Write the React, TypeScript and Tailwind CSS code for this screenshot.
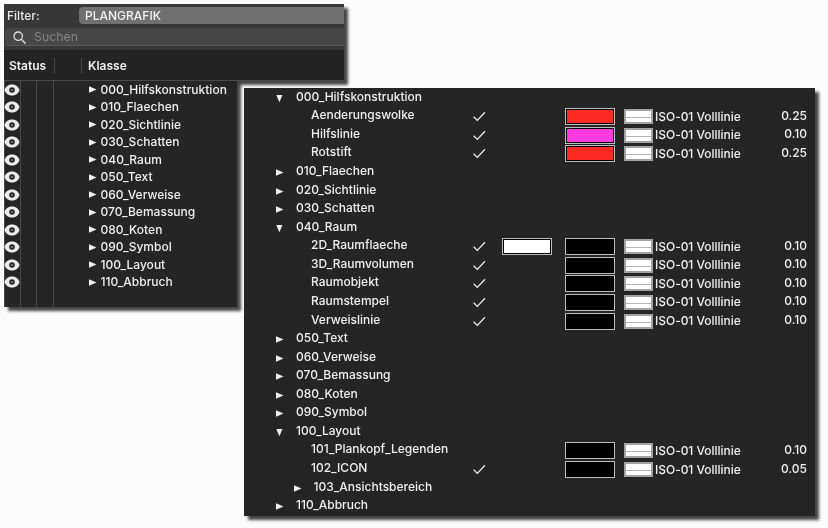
import React from "react";

interface ClassRow {
  name: string;
  kind: "open" | "closed" | "leaf" | "subClosed";
  checked?: boolean;
  fill?: string;
  pen?: string;
  weight?: string;
}

const filterClasses = [
  "000_Hilfskonstruktion",
  "010_Flaechen",
  "020_Sichtlinie",
  "030_Schatten",
  "040_Raum",
  "050_Text",
  "060_Verweise",
  "070_Bemassung",
  "080_Koten",
  "090_Symbol",
  "100_Layout",
  "110_Abbruch",
];

const classRows: ClassRow[] = [
  { name: "000_Hilfskonstruktion", kind: "open" },
  { name: "Aenderungswolke", kind: "leaf", checked: true, pen: "bg-[#ff2a22]", weight: "0.25" },
  { name: "Hilfslinie", kind: "leaf", checked: true, pen: "bg-[#fb3be0]", weight: "0.10" },
  { name: "Rotstift", kind: "leaf", checked: true, pen: "bg-[#ff2a22]", weight: "0.25" },
  { name: "010_Flaechen", kind: "closed" },
  { name: "020_Sichtlinie", kind: "closed" },
  { name: "030_Schatten", kind: "closed" },
  { name: "040_Raum", kind: "open" },
  { name: "2D_Raumflaeche", kind: "leaf", checked: true, fill: "bg-white", pen: "bg-black", weight: "0.10" },
  { name: "3D_Raumvolumen", kind: "leaf", checked: true, pen: "bg-black", weight: "0.10" },
  { name: "Raumobjekt", kind: "leaf", checked: true, pen: "bg-black", weight: "0.10" },
  { name: "Raumstempel", kind: "leaf", checked: true, pen: "bg-black", weight: "0.10" },
  { name: "Verweislinie", kind: "leaf", checked: true, pen: "bg-black", weight: "0.10" },
  { name: "050_Text", kind: "closed" },
  { name: "060_Verweise", kind: "closed" },
  { name: "070_Bemassung", kind: "closed" },
  { name: "080_Koten", kind: "closed" },
  { name: "090_Symbol", kind: "closed" },
  { name: "100_Layout", kind: "open" },
  { name: "101_Plankopf_Legenden", kind: "leaf", pen: "bg-black", weight: "0.10" },
  { name: "102_ICON", kind: "leaf", checked: true, pen: "bg-black", weight: "0.05" },
  { name: "103_Ansichtsbereich", kind: "subClosed" },
  { name: "110_Abbruch", kind: "closed" },
];

const indents: Record<ClassRow["kind"], string> = {
  open: "pl-[31px]",
  closed: "pl-[31px]",
  leaf: "pl-[67px]",
  subClosed: "pl-[48.5px]",
};

const Triangle = ({ open = false }: { open?: boolean }) => (
  <svg width="9" height="9" viewBox="0 0 9 9" fill="#f0f0f0" className="shrink-0">
    <path d={open ? "M1.3 1H7.5L4.4 8.3Z" : "M1 1.3V7.7L8.5 4.5Z"} />
  </svg>
);

const Eye = () => (
  <svg width="16" height="12" viewBox="0 0 16 12" className="-ml-px shrink-0">
    <path d="M0.5 6C1.8 2 4.7.5 8 .5S14.2 2 15.5 6C14.2 10 11.3 11.5 8 11.5S1.8 10 .5 6Z" fill="#ececec" />
    <circle cx="8" cy="6" r="2.8" fill="#252525" />
    <circle cx="8" cy="6" r="1" fill="#8a8a8a" />
  </svg>
);

const Swatch = ({ color }: { color: string }) => (
  <div className="h-[17px] w-[50px] border-[1.5px] border-[#bcbcbc] bg-black p-px">
    <div className={`h-full w-full ${color}`} />
  </div>
);

const FilterWindow = () => (
  <div className="absolute left-1 top-1 w-[340px] drop-shadow-[4.5px_4.5px_1.5px_rgba(0,0,0,0.72)]">
    <div className="h-[46px] bg-[#373737] pt-[3px]">
      <div className="flex h-[17px] items-center">
        <span className="w-[75px] pl-[3px] text-[12px] text-[#e8e8e8]">Filter:</span>
        <div className="flex h-[17px] flex-1 items-center rounded-l bg-[#707070] pl-1.5 text-[12px] text-[#f2f2f2]">
          PLANGRAFIK
        </div>
      </div>
      <div className="ml-px mt-1 flex h-[18px] items-center rounded-l border-y border-b-[#5c5c5c] border-t-[#424242] bg-[#474747] pl-2">
        <svg width="13" height="13" viewBox="0 0 13 13" fill="none" stroke="#dedede" strokeWidth="1.3">
          <circle cx="5.2" cy="5.2" r="4.2" />
          <path d="M8.3 8.3L12.2 12.2" strokeLinecap="round" />
        </svg>
        <span className="ml-2 text-[12.3px] font-normal text-[#858585]">Suchen</span>
      </div>
    </div>
    <div className="flex h-[31px] items-center border-b border-[#4a4a4a] bg-[#242424] pt-px text-[12px] font-semibold text-[#f0f0f0]">
      <span className="w-[50px] pl-[5px]">Status</span>
      <span className="h-4 w-[28px] border-x border-[#454545]" />
      <span className="pl-1.5">Klasse</span>
    </div>
    <div className="flex h-[226px] w-[233px] bg-[#252525]">
      <div className="w-[17px] border-x border-[#484848]">
        {filterClasses.map((name) => (
          <div key={name} className="flex h-[17.5px] items-center">
            <Eye />
          </div>
        ))}
      </div>
      <div className="w-[15.5px] border-r border-[#484848]" />
      <div className="w-[17px] border-r border-[#484848]" />
      <div className="pl-[34px]">
        {filterClasses.map((name) => (
          <div key={name} className="flex h-[17.5px] items-center gap-1">
            <Triangle />
            <span className="tracking-[0.02px]">{name}</span>
          </div>
        ))}
      </div>
    </div>
  </div>
);

const ClassWindow = () => (
  <div className="absolute left-[244px] top-[88px] h-[428px] w-[571px] bg-[#252525] drop-shadow-[4.5px_4.5px_1.5px_rgba(0,0,0,0.72)]">
    {classRows.map((row) => (
      <div key={row.name} className="flex h-[18.57px] items-center">
        <div className={`flex w-[229px] items-center pb-px ${indents[row.kind]}`}>
          {row.kind !== "leaf" && (
            <span className="mr-3 pt-[3px]">
              <Triangle open={row.kind === "open"} />
            </span>
          )}
          <span className="whitespace-nowrap">{row.name}</span>
        </div>
        <div className="w-[29px] pt-0.5">
          {row.checked && (
            <svg width="13" height="11" viewBox="0 0 13 11" fill="none" stroke="#efefef" strokeWidth="1.3">
              <path d="M.7 5.8L4.3 9.4L12 1.2" />
            </svg>
          )}
        </div>
        <div className="w-[63px] pt-0.5">{row.fill && <Swatch color={row.fill} />}</div>
        {row.pen && (
          <>
            <div className="w-[59px] pt-0.5">
              <Swatch color={row.pen} />
            </div>
            <div className="flex h-[15px] w-[29px] translate-y-px items-center border-2 border-[#a2a2a2] bg-white">
              <div className="h-px w-full translate-y-px bg-[#b4b4b4]" />
            </div>
            <span className="w-[110px] whitespace-nowrap pl-0.5 pt-0.5 tracking-[-0.03px]">ISO-01 Volllinie</span>
            <span className="w-[44px] text-right">{row.weight}</span>
          </>
        )}
      </div>
    ))}
  </div>
);

const App: React.FC = () => {
  return (
    <div className="relative h-[528px] w-[828px] overflow-hidden bg-[#fbfbfb] font-['Inter',sans-serif] text-[12px] font-medium leading-none text-[#f0f0f0]">
      <FilterWindow />
      <ClassWindow />
    </div>
  );
};

export default App;
